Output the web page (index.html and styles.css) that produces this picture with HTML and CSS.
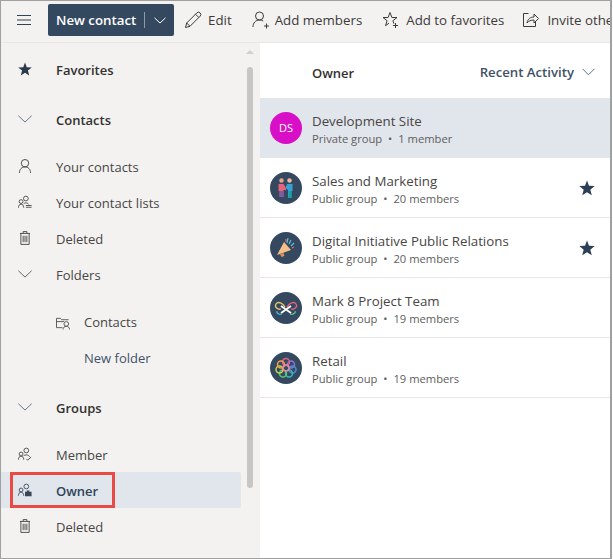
FILE: index.html
```html
<!DOCTYPE html>
<html>
<head>
	<title>People</title>
	<link rel="stylesheet" href="styles.css">
</head>
<body>
<div class="frame">
	<!-- top command bar -->
	<div class="toolbar">
		<button class="tool-menu">
			<svg width="14" height="10" viewBox="0 0 14 10"><path d="M0 .5h14M0 5h14M0 9.500h14" stroke="#2f4359" fill="none"/></svg>
		</button>
		<div class="btn-new">
			<span class="btn-new-label">New contact</span>
			<span class="btn-new-sep"></span>
			<svg width="12" height="7" viewBox="0 0 12 7"><path d="M.5.800L6 6 11.500.800" stroke="#fff" fill="none"/></svg>
		</div>
		<div class="tool tool-edit">
			<svg width="18" height="18" viewBox="0 0 18 18"><path d="M1.500 16.500l1.200-4.500L12.800 1.900a1.800 1.800 0 0 1 3.300 3.300L6 15.300zM2.700 12l3.300 3.300M11.500 3.200l3.300 3.300" stroke="#3c3b3a" fill="none"/></svg>
			<span>Edit</span>
		</div>
		<div class="tool tool-members">
			<svg width="18" height="18" viewBox="0 0 18 18"><circle cx="7.500" cy="5" r="4" stroke="#3c3b3a" fill="none"/><path d="M1 16c0-4 2.500-7 6.500-7 1.500 0 2.700.4 3.700 1.100M12 15h5M14.500 12.500v5" stroke="#3c3b3a" fill="none"/></svg>
			<span>Add members</span>
		</div>
		<div class="tool tool-fav">
			<svg width="17" height="18" viewBox="0 0 17 18"><path d="M8 1.500l1.900 5h5.100l-4.100 3.200 1 3M8 1.500l-1.900 5H1l4.100 3.200-1.600 5 3.500-2.500M11 14.500h5M13.500 12v5" stroke="#3c3b3a" fill="none"/></svg>
			<span>Add to favorites</span>
		</div>
		<div class="tool tool-invite">
			<svg width="16" height="16" viewBox="0 0 16 16"><path d="M5.500 1.500H.5v13h12V10M4 11c.5-4 3.500-6 7-6V2l4.500 4.500L11 11V8c-3 0-5.500 1-7 3z" stroke="#3c3b3a" fill="none"/></svg>
			<span>Invite others</span>
		</div>
	</div>

	<div class="content">
		<!-- left nav -->
		<div class="sidebar">
			<div class="nav-row nav-head">
				<svg class="nav-icon" width="15" height="15" viewBox="0 0 16 16"><path d="M8 1l1.900 5 5.400.3-4.200 3.400 1.400 5.300L8 12l-4.500 3 1.400-5.300L.7 6.300 6.100 6z" fill="#2b3a4b"/></svg>
				<span>Favorites</span>
			</div>
			<div class="nav-row nav-head nav-section">
				<svg class="nav-icon" width="15" height="8" viewBox="0 0 16 9"><path d="M.5.800L8 8 15.500.8" stroke="#4f6884" fill="none"/></svg>
				<span>Contacts</span>
			</div>
			<div class="nav-row nav-first">
				<svg class="nav-icon" width="13" height="15" viewBox="0 0 14 16"><circle cx="7" cy="5" r="4" stroke="#444" fill="none"/><path d="M1 15.500c0-4 2.500-6.500 6-6.500s6 2.500 6 6.500" stroke="#444" fill="none"/></svg>
				<span>Your contacts</span>
			</div>
			<div class="nav-row">
				<svg class="nav-icon" width="14" height="14" viewBox="0 0 16 15"><circle cx="9" cy="3.500" r="2.700" stroke="#444" fill="none"/><circle cx="3.500" cy="7" r="2.200" stroke="#444" fill="none"/><path d="M.5 14c0-2.500 1.200-4 3-4s3 1.500 3 4M6.500 9.500c.7-.6 1.500-1 2.500-1 1.500 0 2.600.7 3.200 1.800M9 11.500h6.500M9 13.500h6.500" stroke="#444" fill="none"/></svg>
				<span>Your contact lists</span>
			</div>
			<div class="nav-row">
				<svg class="nav-icon" width="11" height="14" viewBox="0 0 12 15"><path d="M.5 2.500h11M4 2.500V.5h4v2M1.500 2.500v12h9v-12M4 5v7M6 5v7M8 5v7" stroke="#444" fill="none"/></svg>
				<span>Deleted</span>
			</div>
			<div class="nav-row">
				<svg class="nav-icon" width="15" height="8" viewBox="0 0 16 9"><path d="M.5.800L8 8 15.500.8" stroke="#555" fill="none"/></svg>
				<span>Folders</span>
			</div>
			<div class="nav-row nav-first nav-sub">
				<svg class="sub-icon" width="15" height="14" viewBox="0 0 16 15"><path d="M7 12.500H.5v-10h4l1.500 1.500h7.500M.5 6h8" stroke="#555" fill="none"/><circle cx="11" cy="8.500" r="2.500" stroke="#555" fill="none"/><path d="M7.500 14.500c0-2 1.500-3.500 3.500-3.500s3.500 1.500 3.500 3.500" stroke="#555" fill="none"/></svg>
				<span>Contacts</span>
			</div>
			<div class="nav-row nav-sub nav-link">
				<span>New folder</span>
			</div>
			<div class="nav-row nav-head nav-section">
				<svg class="nav-icon" width="15" height="8" viewBox="0 0 16 9"><path d="M.5.800L8 8 15.500.8" stroke="#4f6884" fill="none"/></svg>
				<span>Groups</span>
			</div>
			<div class="nav-row nav-first">
				<svg class="nav-icon" width="14" height="14" viewBox="0 0 16 15"><circle cx="9.500" cy="3.500" r="2.700" stroke="#444" fill="none"/><circle cx="3.500" cy="7.500" r="2.200" stroke="#444" fill="none"/><path d="M.5 14c0-2.500 1.200-4 3-4s3 1.500 3 4M6.500 9.500c.7-.6 1.800-1 3-1 1.700 0 3 .8 3.800 2.200M9.500 13l1.500 1.500 4-3.500" stroke="#444" fill="none"/></svg>
				<span>Member</span>
			</div>
			<div class="nav-row nav-selected">
				<svg class="nav-icon" width="14" height="14" viewBox="0 0 16 15"><circle cx="9.500" cy="3.500" r="2.700" stroke="#3a4656" fill="none"/><circle cx="3.500" cy="7.500" r="2.200" stroke="#3a4656" fill="none"/><path d="M.5 14c0-2.500 1.200-4 3-4s3 1.500 3 4" stroke="#3a4656" fill="none"/><path d="M8 9.500h2V8h3v1.500h2.500v5H8z" fill="#3a4656"/></svg>
				<span>Owner</span>
				<div class="callout"></div>
			</div>
			<div class="nav-row">
				<svg class="nav-icon" width="11" height="14" viewBox="0 0 12 15"><path d="M.5 2.500h11M4 2.500V.5h4v2M1.500 2.500v12h9v-12M4 5v7M6 5v7M8 5v7" stroke="#444" fill="none"/></svg>
				<span>Deleted</span>
			</div>
			<div class="scroll-up"></div>
			<div class="scroll-thumb"></div>
		</div>

		<!-- group list -->
		<div class="main">
			<div class="list-header">
				<span class="list-title">Owner</span>
				<span class="list-sort">Recent Activity</span>
				<svg class="list-chevron" width="13" height="8" viewBox="0 0 13 8"><path d="M.5.800l6 6 6-6" stroke="#5d7590" fill="none"/></svg>
			</div>

			<div class="group group-selected">
				<div class="avatar avatar-ds">DS</div>
				<div class="group-info">
					<div class="group-name">Development Site</div>
					<div class="group-meta">Private group <i>•</i> 1 member</div>
				</div>
			</div>

			<div class="group">
				<div class="avatar">
					<svg width="32" height="32" viewBox="0 0 32 32">
						<circle cx="11.500" cy="8.500" r="2.200" fill="#e9a58c"/>
						<circle cx="19.500" cy="8.500" r="2.200" fill="#f0b79a"/>
						<path d="M8.500 12h5l2.500 4v2h-2.500v7h-4v-6H8.500z" fill="#e5637d"/>
						<path d="M10 19h3.500v6H10z" fill="#7d5ba6"/>
						<path d="M17 12h5.500v7h-1v7h-3.500v-8l-2.500-2z" fill="#3aa0d8"/>
						<path d="M18.500 19h3v7h-3z" fill="#17a2a2"/>
					</svg>
				</div>
				<div class="group-info">
					<div class="group-name">Sales and Marketing</div>
					<div class="group-meta">Public group <i>•</i> 20 members</div>
				</div>
				<svg class="group-star" width="16" height="16" viewBox="0 0 16 16"><path d="M8 .5l2 5.300 5.700.3-4.400 3.600 1.500 5.600L8 12.200l-4.800 3.100 1.500-5.600L.3 6.100 6 5.800z" fill="#2b3f57"/></svg>
			</div>

			<div class="group">
				<div class="avatar">
					<svg width="32" height="32" viewBox="0 0 32 32">
						<path d="M7 23l7-13 7 8z" fill="#f3c088"/>
						<path d="M7 23l3-1 1.500 3 3-1-1-3z" fill="#ea8f5c"/>
						<path d="M18 6l-1 5M21 8l-2 4M24 11l-3 3" stroke="#5cc3d8" stroke-width="1.200" fill="none"/>
						<path d="M16 7l0 3M24 15l-2 1" stroke="#e5637d" stroke-width="1.200" fill="none"/>
					</svg>
				</div>
				<div class="group-info">
					<div class="group-name">Digital Initiative Public Relations</div>
					<div class="group-meta">Public group <i>•</i> 20 members</div>
				</div>
				<svg class="group-star" width="16" height="16" viewBox="0 0 16 16"><path d="M8 .5l2 5.300 5.700.3-4.400 3.600 1.500 5.600L8 12.200l-4.800 3.100 1.500-5.600L.3 6.100 6 5.800z" fill="#2b3f57"/></svg>
			</div>

			<div class="group">
				<div class="avatar">
					<svg width="32" height="32" viewBox="0 0 32 32">
						<path d="M15 15c-2-4-7-6-9-3s2 6 5 5" stroke="#f0c36a" stroke-width="1.300" fill="none"/>
						<path d="M17 15c2-4 7-6 9-3s-2 6-5 5" stroke="#e5637d" stroke-width="1.300" fill="none"/>
						<path d="M12 22c-3 1-6-1-5-3" stroke="#4fb6d8" stroke-width="1.300" fill="none"/>
						<path d="M20 22c3 1 6-1 5-3" stroke="#5cc48c" stroke-width="1.300" fill="none"/>
						<path d="M11 14l10 7M21 14l-10 7" stroke="#fff" stroke-width="1.800"/>
					</svg>
				</div>
				<div class="group-info">
					<div class="group-name">Mark 8 Project Team</div>
					<div class="group-meta">Public group <i>•</i> 19 members</div>
				</div>
			</div>

			<div class="group">
				<div class="avatar">
					<svg width="32" height="32" viewBox="0 0 32 32" fill="none" stroke-width="1.500">
						<circle cx="16" cy="10" r="3.500" stroke="#e5637d"/>
						<circle cx="21" cy="12.500" r="3.500" stroke="#9a6fd0"/>
						<circle cx="22.500" cy="17.500" r="3.500" stroke="#4a90d8"/>
						<circle cx="19" cy="21.500" r="3.500" stroke="#3fb6b0"/>
						<circle cx="13" cy="21.500" r="3.500" stroke="#5cc46c"/>
						<circle cx="9.500" cy="17.500" r="3.500" stroke="#c0d050"/>
						<circle cx="11" cy="12.500" r="3.500" stroke="#f0a050"/>
						<circle cx="16" cy="16" r="3" stroke="#e58a9c"/>
					</svg>
				</div>
				<div class="group-info">
					<div class="group-name">Retail</div>
					<div class="group-meta">Public group <i>•</i> 19 members</div>
				</div>
			</div>
		</div>
	</div>
</div>
</body>
</html>
```

FILE: styles.css
```css
html, body {
	margin: 0;
	padding: 0;
	background: #fff;
}
body {
	font-family: "Open Sans", "Noto Sans", sans-serif;
	font-size: 13px;
	color: #323130;
}
.frame {
	width: 609px;
	height: 557px;
	border: 1px solid #a0a0a0;
	border-right-width: 2px;
	overflow: hidden;
	background: #fff;
}

/* command bar */
.toolbar {
	display: flex;
	align-items: center;
	height: 32px;
	padding: 3px 0 6px;
	background: #f3f2f1;
	border-bottom: 1px solid #e8e7e6;
	white-space: nowrap;
	font-size: 13.3px;
}
.tool-menu {
	flex: none;
	width: 47px;
	height: 32px;
	padding: 0 1px 0 0;
	border: none;
	background: none;
}
.btn-new {
	display: flex;
	align-items: center;
	flex: none;
	width: 126px;
	height: 32px;
	border-radius: 2px;
	background: #344960;
	color: #fff;
	font-weight: 600;
	box-sizing: border-box;
	padding-left: 8px;
}
.btn-new-label {
	width: 88px;
}
.btn-new-sep {
	width: 1px;
	height: 16px;
	margin-right: 9px;
	background: #8d9aa8;
}
.tool {
	display: flex;
	align-items: center;
	flex: none;
	color: #3c3b3a;
}
.tool-edit {
	margin-left: 10px;
}
.tool-edit span {
	margin-left: 6px;
}
.tool-members {
	margin-left: 20px;
}
.tool-members span {
	margin-left: 5px;
}
.tool-fav {
	margin-left: 20px;
}
.tool-fav span {
	margin-left: 7px;
}
.tool-invite {
	margin-left: 19px;
}
.tool-invite span {
	margin-left: 8px;
}

.content {
	display: flex;
	height: 515px;
}

/* left nav */
.sidebar {
	position: relative;
	flex: none;
	width: 259px;
	box-sizing: border-box;
	padding-top: 8px;
	background: #f3f2f1;
}
.nav-row {
	position: relative;
	display: flex;
	align-items: center;
	width: 240px;
	height: 36px;
	padding: 2px 0 0 55px;
	box-sizing: border-box;
	color: #484644;
}
.nav-icon {
	position: absolute;
	left: 24px;
	top: 50%;
	transform: translate(-50%, -50%);
}
.nav-head {
	color: #323130;
	font-weight: 600;
}
.nav-section {
	margin-top: 14px;
}
.nav-first {
	margin-top: 11px;
}
.nav-sub {
	padding-left: 83px;
}
.sub-icon {
	position: absolute;
	left: 55px;
	top: 13px;
}
.nav-link {
	color: #3f5268;
}
.nav-selected {
	background: #e1e5ec;
	border-radius: 0 2px 2px 0;
	color: #2f4359;
	font-weight: 600;
}
.callout {
	position: absolute;
	left: 9px;
	top: 0;
	width: 105px;
	height: 36px;
	box-sizing: border-box;
	border: 3px solid #ea4a45;
}
.scroll-up {
	position: absolute;
	left: 245px;
	top: 7px;
	width: 0;
	height: 0;
	border-left: 4px solid transparent;
	border-right: 4px solid transparent;
	border-bottom: 4px solid #d2d0ce;
}
.scroll-thumb {
	position: absolute;
	left: 246px;
	top: 24px;
	width: 6px;
	height: 421px;
	border-radius: 3px;
	background: #c8c6c4;
}

/* group list */
.main {
	flex: 1;
	min-width: 0;
}
.list-header {
	display: flex;
	align-items: center;
	height: 55px;
	padding: 0 15px 0 52px;
}
.list-title {
	flex: 1;
	font-weight: 600;
	color: #323130;
	padding-top: 4px;
}
.list-sort {
	margin-right: 8px;
	padding-top: 2px;
	font-size: 13.2px;
	font-weight: 600;
	color: #3f5268;
}
.list-chevron {
	margin-top: 2px;
}
.group {
	display: flex;
	align-items: center;
	height: 60px;
	box-sizing: border-box;
	padding: 0 15px 0 10px;
	border-bottom: 1px solid #e8e7e6;
}
.group-selected {
	background: #e1e5ec;
	border-bottom: none;
}
.avatar {
	flex: none;
	width: 32px;
	height: 32px;
	margin-right: 10px;
	border-radius: 50%;
	background: #344960;
	overflow: hidden;
}
.avatar svg {
	display: block;
}
.avatar-ds {
	background: #d80fc6;
	color: #fff;
	font-size: 11px;
	line-height: 32px;
	text-align: center;
}
.group-info {
	flex: 1;
	min-width: 0;
	padding-top: 4px;
}
.group-name {
	color: #484644;
	font-size: 13.3px;
	line-height: 18px;
}
.group-meta {
	color: #605e5c;
	font-size: 11.2px;
	line-height: 18px;
}
.group-meta i {
	font-style: normal;
	margin: 0 3px;
}
.group-star {
	flex: none;
}
```
